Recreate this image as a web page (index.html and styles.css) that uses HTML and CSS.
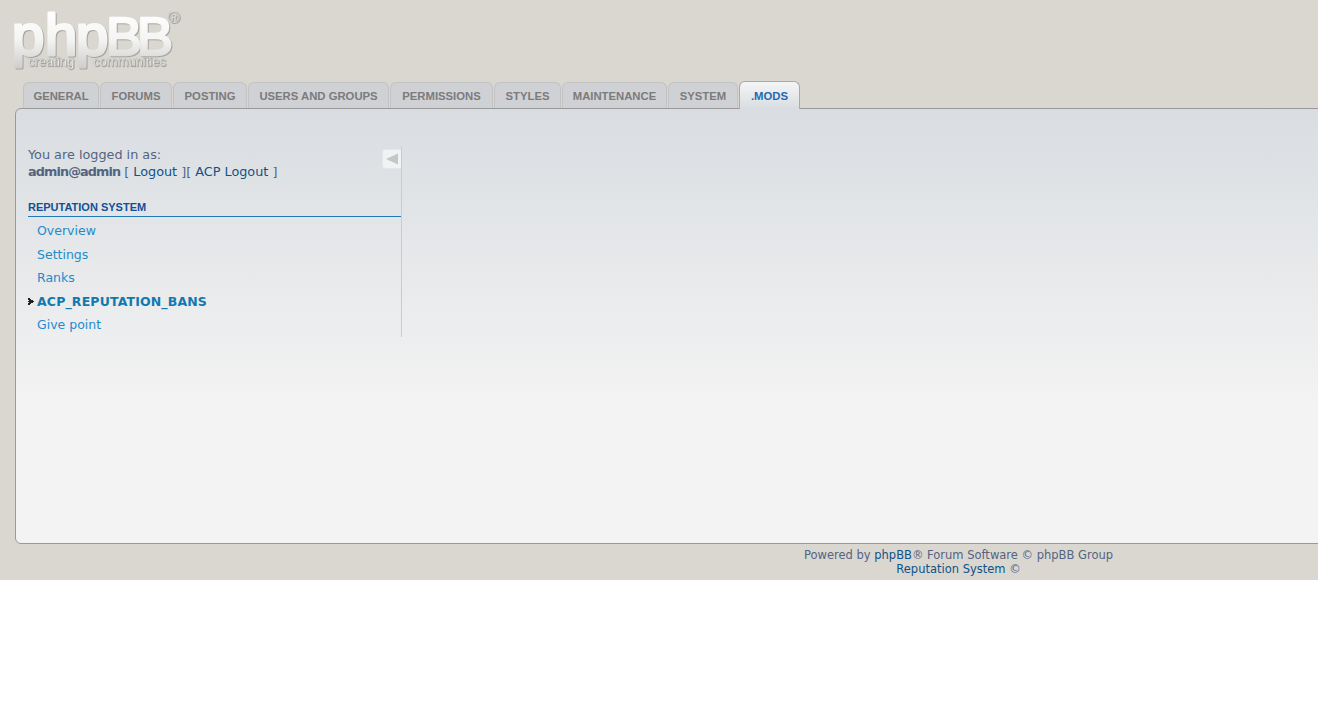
FILE: index.html
```html
<!DOCTYPE html>
<html lang="en">
<head>
  <meta charset="UTF-8">
  <title>Administration Control Panel</title>
  <link rel="stylesheet" href="styles.css">
</head>
<body>
  <div class="wrap">
    <div class="page-header">
      <a class="logo" href="#">
        <svg width="184" height="72" viewBox="0 0 184 72">
          <defs>
            <linearGradient id="logoFill" gradientUnits="userSpaceOnUse" x1="0" y1="12" x2="0" y2="67">
              <stop offset="0" stop-color="#ffffff"/>
              <stop offset="0.5" stop-color="#f4f4f3"/>
              <stop offset="1" stop-color="#cfcfcd"/>
            </linearGradient>
          </defs>
          <text class="logo-main" x="12 45 76" y="55">php</text>
          <text class="logo-caps" x="106 137" y="55">BB</text>
          <text class="logo-reg" x="168" y="23">®</text>
          <text class="logo-sub" x="28" y="66">creating</text>
          <text class="logo-sub" x="93" y="66">communities</text>
        </svg>
      </a>
    </div>

    <ul class="tabs">
      <li><a href="#">General</a></li>
      <li><a href="#">Forums</a></li>
      <li><a href="#">Posting</a></li>
      <li><a href="#">Users and groups</a></li>
      <li><a href="#">Permissions</a></li>
      <li><a href="#">Styles</a></li>
      <li><a href="#">Maintenance</a></li>
      <li><a href="#">System</a></li>
      <li class="activetab"><a href="#">.Mods</a></li>
    </ul>

    <div class="panel">
      <div class="menu">
        <button class="toggle" type="button" aria-label="Hide menu">
          <svg width="14" height="12" viewBox="0 0 14 12"><path d="M13 0.5V11.5L1 6Z" fill="#c4c6c8"/></svg>
        </button>
        <p class="whois">You are logged in as:<br>
          <strong>admin@admin</strong> [ <a href="#">Logout</a> ][ <a href="#">ACP Logout</a> ]</p>
        <div class="menu-head">Reputation System</div>
        <ul class="menu-list">
          <li><a href="#">Overview</a></li>
          <li><a href="#">Settings</a></li>
          <li><a href="#">Ranks</a></li>
          <li class="active">
            <svg class="marker" width="6" height="7" viewBox="0 0 6 7" shape-rendering="crispEdges"><path d="M0 0h2v1h1v1h2v1h1v1h-1v1h-2v1h-1v1h-2v-2h1v-1h-1v-1h1v-1h-1z" fill="#222"/></svg>
            <a href="#">ACP_REPUTATION_BANS</a>
          </li>
          <li><a href="#">Give point</a></li>
        </ul>
      </div>
    </div>

    <div class="copyright">
      Powered by <a href="#">phpBB</a>® Forum Software © phpBB Group<br>
      <a href="#">Reputation System</a> ©
    </div>
  </div>
</body>
</html>
```
FILE: styles.css
```css
html, body {
  margin: 0;
  padding: 0;
  background-color: #fff;
  overflow: hidden;
}
body {
  font-family: Verdana, "DejaVu Sans", sans-serif;
  font-size: 13px;
  color: #536482;
}
a {
  text-decoration: none;
}
.wrap {
  width: 1902px;
  height: 580px;
  box-sizing: border-box;
  padding: 0 0 0 15px;
  background-color: #dad7d0;
}
.page-header {
  height: 82px;
}
.logo {
  display: block;
  width: 184px;
  height: 72px;
  margin-left: -15px;
}
.logo svg {
  display: block;
  filter: drop-shadow(1px 1px 0 #a5a4a0);
}
.logo-main,
.logo-caps {
  font-family: "Liberation Sans", sans-serif;
  fill: url(#logoFill);
  stroke: url(#logoFill);
  stroke-linejoin: round;
}
.logo-main {
  font-size: 58px;
  stroke-width: 3;
}
.logo-caps {
  font-size: 54px;
  stroke-width: 2.5;
}
.logo-reg {
  font-family: "Liberation Sans", sans-serif;
  font-size: 16px;
  fill: #fff;
  stroke: #a8a8a4;
  stroke-width: 0.4;
}
.logo-sub {
  font-family: "Liberation Sans", sans-serif;
  font-size: 13px;
  fill: #f6f6f4;
  stroke: #a3a3a0;
  stroke-width: 0.3;
}

/* tabs */
.tabs {
  display: grid;
  grid-template-columns: 76px 72px 74px 141px 103px 67px 105px 70px 61px;
  gap: 1px;
  list-style: none;
  margin: 0 0 0 8px;
  padding: 0;
  height: 26px;
  position: relative;
  z-index: 1;
}
.tabs li a {
  display: block;
  height: 26px;
  box-sizing: border-box;
  text-align: center;
  line-height: 27px;
  font-family: "Liberation Sans", Arial, sans-serif;
  font-size: 11.3px;
  font-weight: bold;
  text-transform: uppercase;
  color: #7b7b7b;
  background-color: #cfd1d5;
  border: 1px solid #c2c3c5;
  border-bottom: 0;
  border-radius: 6px 6px 0 0;
}
.tabs li.activetab a {
  height: 28px;
  margin-top: -1px;
  line-height: 28px;
  color: #1f69b3;
  background: linear-gradient(#f4f5f6, #d9dde1);
  border-color: #a9a9a9;
}

/* main panel */
.panel {
  height: 436px;
  box-sizing: border-box;
  padding: 38px 12px 0;
  border: 1px solid #999;
  border-radius: 6px;
  background: linear-gradient(#d9dde1, #f3f3f3 68%);
}
.menu {
  position: relative;
  width: 373px;
  height: 190px;
  border-right: 1px solid #c9cbcd;
}
.toggle {
  position: absolute;
  top: 2px;
  right: 0;
  width: 19px;
  height: 20px;
  padding: 0;
  display: flex;
  align-items: center;
  justify-content: center;
  background-color: #f1f2f3;
  border: 1px solid #e4e5e7;
  border-right: 0;
  border-radius: 3px 0 0 3px;
}
.whois {
  margin: 0;
  font-size: 12.8px;
  line-height: 16.5px;
  color: #536482;
}
.whois strong {
  letter-spacing: -0.9px;
  color: #536482;
}
.whois a {
  color: #105289;
}
.menu-head {
  margin-top: 19px;
  height: 18px;
  box-sizing: border-box;
  border-bottom: 1px solid #1f7ab5;
  font-family: "Liberation Sans", Arial, sans-serif;
  font-size: 11px;
  line-height: 16px;
  font-weight: bold;
  text-transform: uppercase;
  color: #115098;
}
.menu-list {
  list-style: none;
  margin: 2px 0 0;
  padding: 0;
}
.menu-list li {
  position: relative;
  height: 23.5px;
  line-height: 24px;
  padding-left: 9px;
  font-size: 12.5px;
}
.menu-list a {
  color: #1d8ccb;
}
.menu-list .active a {
  font-weight: bold;
  letter-spacing: 0.15px;
  color: #1079b0;
}
.marker {
  position: absolute;
  left: 0;
  top: 8px;
}

.copyright {
  padding-top: 4px;
  text-align: center;
  font-size: 11.5px;
  line-height: 14px;
  color: #536482;
}
.copyright a {
  color: #105289;
}
```
